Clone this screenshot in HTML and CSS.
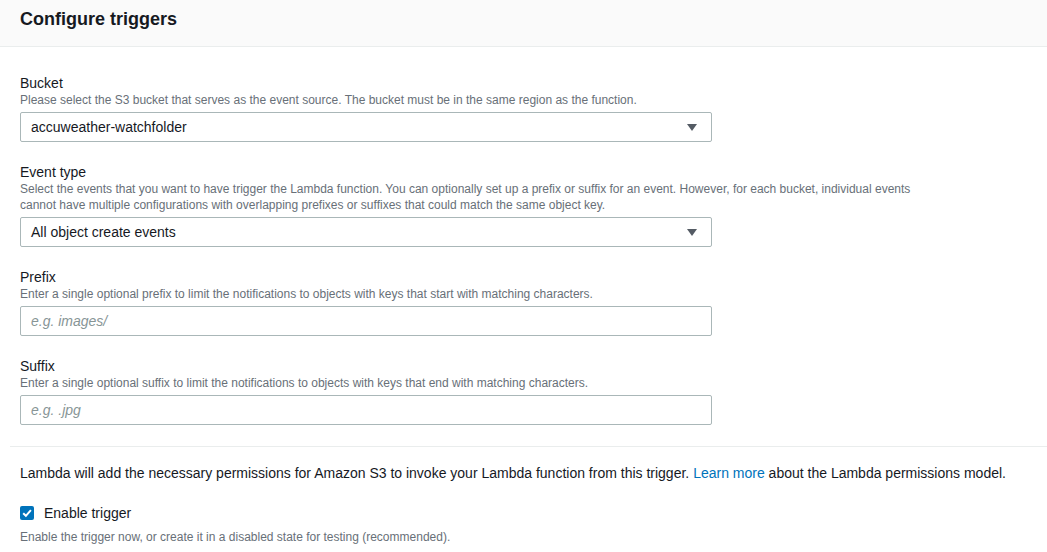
FILE: index.html
```html
<!DOCTYPE html>
<html>
<head>
<meta charset="utf-8">
<link rel="stylesheet" href="styles.css">
</head>
<body>
<div class="page">
  <div class="header"><h2 class="title">Configure triggers</h2></div>
  <div class="form">
    <div class="field">
      <div class="label">Bucket</div>
      <div class="desc">Please select the S3 bucket that serves as the event source. The bucket must be in the same region as the function.</div>
      <div class="select"><span class="value">accuweather-watchfolder</span><span class="caret"></span></div>
    </div>
    <div class="field">
      <div class="label">Event type</div>
      <div class="desc">Select the events that you want to have trigger the Lambda function. You can optionally set up a prefix or suffix for an event. However, for each bucket, individual events<br>cannot have multiple configurations with overlapping prefixes or suffixes that could match the same object key.</div>
      <div class="select"><span class="value">All object create events</span><span class="caret"></span></div>
    </div>
    <div class="field">
      <div class="label">Prefix</div>
      <div class="desc">Enter a single optional prefix to limit the notifications to objects with keys that start with matching characters.</div>
      <div class="input"><span class="placeholder">e.g. images/</span></div>
    </div>
    <div class="field">
      <div class="label">Suffix</div>
      <div class="desc">Enter a single optional suffix to limit the notifications to objects with keys that end with matching characters.</div>
      <div class="input"><span class="placeholder">e.g. .jpg</span></div>
    </div>
  </div>
  <div class="footer">
    <p class="note">Lambda will add the necessary permissions for Amazon S3 to invoke your Lambda function from this trigger. <a class="link" href="#">Learn more</a> about the Lambda permissions model.</p>
    <div class="check-row">
      <span class="checkbox"><svg width="14" height="14" viewBox="0 0 14 14"><path d="M3.2 7.2 L5.9 9.8 L10.9 4.2" fill="none" stroke="#fff" stroke-width="2"/></svg></span>
      <span class="check-label">Enable trigger</span>
    </div>
    <div class="desc check-desc">Enable the trigger now, or create it in a disabled state for testing (recommended).</div>
  </div>
</div>
</body>
</html>
```
FILE: styles.css
```css
html, body {
  margin: 0;
  padding: 0;
  background: #fff;
}
body {
  font-family: "Liberation Sans", Arial, sans-serif;
  color: #16191f;
}
.page {
  width: 1047px;
}
.header {
  height: 47px;
  background: #fafafa;
  border-bottom: 1px solid #eaeded;
  box-sizing: border-box;
  padding: 9px 20px 0;
}
.title {
  margin: 0;
  font-size: 18px;
  line-height: 20px;
  font-weight: bold;
  color: #16191f;
}
.form {
  padding: 27px 20px 0;
}
.field {
  margin-bottom: 21px;
}
.label {
  font-size: 14px;
  line-height: 18px;
  color: #16191f;
}
.desc {
  font-size: 12px;
  line-height: 16px;
  color: #687078;
}
.select, .input {
  width: 692px;
  height: 30px;
  box-sizing: border-box;
  border: 1px solid #aab7b8;
  border-radius: 2px;
  margin-top: 4px;
  display: flex;
  align-items: center;
  padding: 0 14px 0 10px;
  font-size: 14px;
}
.select .value {
  flex: 1;
  color: #16191f;
}
.caret {
  width: 0;
  height: 0;
  border-left: 5px solid transparent;
  border-right: 5px solid transparent;
  border-top: 7px solid #545b64;
}
.placeholder {
  color: #879596;
  font-style: italic;
}
.footer {
  margin-left: 10px;
  border-top: 1px solid #eaeded;
  padding: 16px 10px 0;
}
.note {
  margin: 0;
  font-size: 14px;
  line-height: 20px;
}
.link {
  color: #0073bb;
  text-decoration: none;
}
.check-row {
  display: flex;
  align-items: center;
  margin-top: 20px;
  height: 20px;
}
.checkbox {
  width: 14px;
  height: 14px;
  background: #0073bb;
  border-radius: 2px;
  display: flex;
}
.check-label {
  margin-left: 10px;
  font-size: 14px;
}
.check-desc {
  margin-top: 6px;
}
```
